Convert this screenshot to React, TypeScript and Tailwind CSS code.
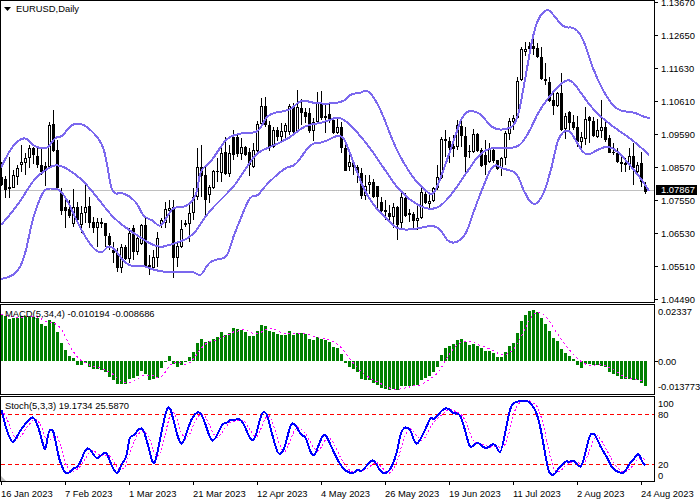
import React from 'react';

type Candle = [number, number, number, number, number]; // high, body top, body bottom, low, bull

const candles: Candle[] = [
  [162,177,185,186,0],[176,179,190,198,0],[157,187,189,198,1],[170,175,188,188,1],[165,168,177,185,1],[145,162,165,172,1],
  [153,158,163,175,1],[145,148,158,168,1],[147,148,155,164,0],[148,156,165,168,0],[148,165,172,175,0],[162,166,170,186,0],
  [122,125,167,168,1],[110,124,151,152,0],[140,150,188,190,0],[188,192,211,215,0],[197,207,211,228,0],[200,209,216,218,0],
  [189,207,224,227,1],[202,207,220,223,0],[206,213,225,233,1],[183,207,213,223,1],[197,206,223,228,0],[217,222,228,233,0],
  [218,222,228,247,1],[218,222,224,228,0],[223,223,236,247,0],[233,236,245,250,0],[242,250,253,263,0],[248,253,268,272,0],
  [244,247,268,273,1],[245,247,259,260,0],[228,233,259,263,1],[225,228,252,260,0],[235,238,252,255,1],[224,225,244,245,1],
  [217,225,267,268,0],[255,265,268,275,0],[250,257,268,269,1],[232,238,258,267,1],[218,220,224,228,1],[202,209,223,228,1],
  [200,208,211,223,1],[200,207,258,278,0],[241,246,258,267,1],[220,229,247,248,1],[220,223,225,227,0],[205,213,224,242,1],
  [188,197,213,220,1],[148,167,197,200,1],[145,167,176,197,0],[167,175,200,215,0],[185,187,195,203,1],[170,171,188,189,1],
  [158,171,172,182,0],[147,153,173,182,1],[137,152,174,175,0],[145,153,174,177,1],[130,137,155,160,0],[133,137,154,157,0],
  [138,147,154,160,1],[146,147,155,156,0],[148,152,165,176,0],[143,150,167,168,1],[121,124,151,152,1],[98,106,124,125,1],
  [97,106,125,127,0],[121,125,147,151,0],[127,130,147,148,1],[127,130,137,141,0],[123,131,137,142,1],[123,125,132,138,1],
  [104,106,132,135,1],[103,107,132,133,0],[90,107,132,133,1],[99,108,113,125,0],[108,112,117,123,0],[108,113,131,133,0],
  [118,122,131,141,1],[92,103,122,123,1],[91,103,118,120,0],[103,116,118,133,0],[103,114,120,123,0],[117,120,133,134,0],
  [118,127,133,134,1],[122,127,148,153,0],[145,148,171,171,0],[152,162,167,171,1],[160,162,167,175,0],[165,167,173,183,0],
  [168,173,196,199,0],[175,186,196,200,1],[175,182,185,194,1],[179,182,197,198,0],[186,186,197,210,0],[197,202,211,212,0],
  [200,210,212,220,0],[205,213,217,222,0],[203,207,217,228,1],[206,207,225,240,0],[193,197,223,228,1],[193,198,216,217,0],
  [209,213,215,222,0],[212,214,221,228,0],[205,218,221,230,1],[188,192,218,219,1],[190,194,203,204,0],[192,201,204,208,1],
  [187,188,201,202,1],[165,177,188,190,1],[137,139,178,179,1],[130,139,141,157,0],[137,141,148,163,0],[135,146,149,157,0],
  [120,125,147,150,1],[120,126,136,147,0],[127,136,157,172,0],[145,151,152,158,0],[129,134,152,153,1],[133,134,151,152,0],
  [148,150,166,167,0],[140,155,165,175,0],[143,148,162,163,1],[148,150,161,163,0],[160,160,169,170,0],[157,158,168,176,1],
  [131,133,158,165,1],[118,121,134,140,1],[115,118,122,130,1],[77,81,118,119,1],[47,49,80,81,1],[42,49,52,56,1],
  [42,46,49,50,0],[32,46,49,55,0],[43,48,57,58,0],[47,57,79,80,0],[63,79,81,85,0],[77,82,101,102,0],
  [93,100,106,115,0],[92,93,106,107,1],[73,93,130,131,0],[113,116,129,139,1],[111,112,123,130,0],[115,122,128,130,0],
  [116,127,142,147,0],[132,137,142,152,1],[107,119,139,145,1],[116,117,121,143,0],[117,121,136,137,0],[119,130,137,138,1],
  [100,127,131,138,1],[120,127,140,142,0],[135,138,153,153,0],[143,152,153,155,0],[148,153,162,163,0],[157,162,164,172,0],
  [158,163,165,172,1],[148,156,165,170,1],[143,156,168,185,0],[162,165,172,175,1],[152,163,182,187,0],[182,185,192,194,0],
];

// bollinger bands, traced in page pixels
const upperBand = '1,168 3,163 13,145 25,136 33,146 47,150 55,137 62,137 70,126 77,123 87,126 102,142 107,163 112,195 123,192 137,202 143,217 153,220 160,228 167,217 173,207 187,207 197,195 200,170 210,163 220,148 227,138 240,133 253,133 260,130 268,113 290,111 301,99 316,104 343,103 350,94 361,93 368,89 380,107 396,150 413,178 423,188 433,197 441,177 453,143 464,110 480,112 492,129 507,130 517,123 525,80 535,23 547,7 555,17 564,28 575,27 584,40 592,67 604,93 617,111 634,112 644,117 650,118';
const middleBand = '1,225 17,207 33,180 45,170 58,163 80,177 97,197 113,218 133,233 157,248 170,245 193,237 207,213 233,188 243,173 256,153 270,147 290,138 305,125 323,123 336,117 346,120 366,142 383,167 400,192 420,207 436,210 450,197 467,172 480,153 493,147 517,149 528,135 539,110 557,87 569,78 577,87 593,110 613,127 633,140 649,155';
const lowerBand = '1,279 15,277 25,257 32,220 43,190 50,188 63,190 82,233 100,257 110,242 127,267 143,265 153,270 173,273 193,271 201,277 208,263 217,259 227,258 233,237 243,213 250,196 258,196 263,188 285,167 296,166 310,143 323,143 341,133 348,147 366,197 390,223 400,230 416,229 433,225 441,230 450,245 465,238 473,213 483,187 493,163 503,169 517,172 523,190 533,207 543,197 552,167 558,137 567,129 573,135 585,157 597,150 607,146 617,150 640,177 649,191';

const macd = [
  47,45,42,43,43,45,45,44,44,43,37,35,41,39,29,18,11,5,3,-4,-4,-2,-6,-8,-8,-9,-11,-16,-19,-23,-23,-23,-18,-17,-15,-10,-13,-19,-18,-17,-7,-1,5,-3,-6,-4,-1,4,9,18,22,19,20,22,24,29,26,28,
  33,32,31,29,25,25,30,36,35,30,29,27,26,26,30,26,28,28,27,22,21,24,22,21,19,14,13,7,-2,-6,-8,-11,-18,-19,-19,-22,-24,-27,-28,-29,-28,-29,-25,-25,-25,-25,-24,-19,-17,-15,-11,-6,6,13,15,17,21,22,19,
  16,17,15,13,10,10,8,4,4,9,15,18,28,40,46,50,51,49,43,37,30,23,20,12,8,5,2,-4,-7,-3,-3,-4,-4,-5,-6,-11,-13,-15,-18,-18,-18,-19,-19,-22,-25,
];

const stochTrace: [number, number][] = [
  [1,410],[5,427],[10,440],[13,443],[20,430],[28,420],[33,416],[38,427],[42,443],[45,452],[48,430],[53,429],[58,457],[62,468],[65,474],[70,472],[73,468],[78,467],[85,449],[89,448],[95,458],[98,458],[103,453],[106,452],[112,468],[117,475],[122,462],[126,458],[129,436],[133,436],[139,428],[143,429],[148,447],[153,467],[157,453],[165,412],[169,405],[173,420],[178,440],[182,446],[190,420],[197,411],[202,415],[210,440],[214,441],[222,423],[227,423],[230,419],[233,421],
  [238,418],[243,423],[249,438],[254,442],[261,412],[266,412],[270,428],[277,454],[281,454],[285,445],[290,424],[294,423],[301,436],[305,436],[310,453],[314,457],[321,437],[325,433],[333,452],[341,467],[348,473],[354,473],[357,469],[361,472],[370,461],[374,460],[381,474],[389,472],[396,455],[401,428],[409,427],[414,442],[417,445],[426,427],[430,417],[434,420],[442,409],[448,408],[453,414],[457,413],[461,417],[467,440],
  [470,449],[477,441],[485,450],[494,442],[498,452],[501,452],[509,410],[513,402],[522,401],[529,401],[538,415],[547,468],[550,475],[554,475],[558,468],[562,465],[565,461],[569,462],[574,460],[578,467],[582,466],[589,434],[594,433],[600,447],[607,458],[612,469],[620,473],[624,473],[630,462],[633,460],[638,452],[642,463],[645,465],
];

const candleX = (i: number) => 1 + i * 4;

const stochAt = (x: number) => {
  for (let i = 1; i < stochTrace.length; i++) {
    const [x0, y0] = stochTrace[i - 1];
    const [x1, y1] = stochTrace[i];
    if (x <= x1) return y0 + ((y1 - y0) * (x - x0)) / (x1 - x0);
  }
  return stochTrace[stochTrace.length - 1][1];
};

// rounds the corners of a traced line: quadratic curves through the segment midpoints
const smooth = (pts: number[][]) => {
  let d = `M${pts[0][0]} ${pts[0][1]}`;
  for (let i = 1; i < pts.length - 1; i++) {
    const mx = (pts[i][0] + pts[i + 1][0]) / 2;
    const my = (pts[i][1] + pts[i + 1][1]) / 2;
    d += ` Q${pts[i][0]} ${pts[i][1]} ${mx} ${my}`;
  }
  const last = pts[pts.length - 1];
  return `${d} L${last[0]} ${last[1]}`;
};

const bandPath = (s: string) => smooth(s.split(' ').map((p) => p.split(',').map(Number)));

// signal lines are plain moving averages of the main lines
const macdSignal = macd
  .map((_, i) => {
    const win = macd.slice(Math.max(0, i - 3), i + 1);
    const y = 361 - win.reduce((a, b) => a + b, 0) / win.length;
    return `${candleX(i) + 0.5},${y.toFixed(1)}`;
  })
  .join(' ');

const stochSignal = candles
  .map((_, i) => {
    const ys = [i, i - 1, i - 2].map((k) => stochAt(candleX(Math.max(0, k))));
    return `${candleX(i) + 0.5},${((ys[0] + ys[1] + ys[2]) / 3).toFixed(1)}`;
  })
  .join(' ');

const priceLabels = ['1.13670', '1.12650', '1.11630', '1.10610', '1.09590', '1.08570', '1.07550', '1.06530', '1.05510', '1.04490'];
const dateLabels = ['16 Jan 2023', '7 Feb 2023', '1 Mar 2023', '21 Mar 2023', '12 Apr 2023', '4 May 2023', '26 May 2023', '19 Jun 2023', '11 Jul 2023', '2 Aug 2023', '24 Aug 2023'];

const Tick = () => <span className="w-[3px] h-px bg-black shrink-0" />;

const App: React.FC = () => {
  return (
    <div className="relative w-[700px] h-[500px] overflow-hidden bg-white text-black text-[9.4px] leading-[11px] [font-family:'Liberation_Sans',sans-serif]">
      <div className="flex flex-col gap-px">
        {/* price pane */}
        <div className="flex h-[303px]">
          <div className="relative w-[655px] shrink-0 border border-black">
            <svg width={653} height={301} viewBox="1 1 653 301" className="block">
              <line x1={1} x2={654} y1={190.5} y2={190.5} stroke="#c0c0c0" />
              <g shapeRendering="crispEdges">
                {candles.map(([hi, top, bot, lo, bull], i) => {
                  const x = candleX(i);
                  return (
                    <g key={i}>
                      <rect x={x} y={hi} width={1} height={lo - hi} fill="#000" />
                      {bull ? (
                        <rect x={x - 0.5} y={top + 0.5} width={2} height={Math.max(bot - top - 1, 1)} fill="#fff" stroke="#000" />
                      ) : (
                        <rect x={x - 1} y={top} width={3} height={Math.max(bot - top, 1)} fill="#000" />
                      )}
                    </g>
                  );
                })}
              </g>
              <g fill="none" stroke="#7b68ee" strokeWidth={2} strokeLinejoin="round" shapeRendering="crispEdges">
                <path d={bandPath(upperBand)} />
                <path d={bandPath(middleBand)} />
                <path d={bandPath(lowerBand)} />
              </g>
              <polygon points="4,7 11,7 7.5,11" fill="#000" />
            </svg>
            <span className="absolute left-[15px] top-[2px]">EURUSD,Daily</span>
          </div>
          <div className="relative flex-1">
            <div className="flex flex-col -mt-[14px] h-[303px]">
              {priceLabels.map((p) => (
                <div key={p} className="flex items-center h-[33px] shrink-0 gap-[3px]">
                  <Tick />
                  <span>{p}</span>
                </div>
              ))}
            </div>
            <span className="absolute left-[1px] top-[185px] w-[41px] h-[10px] bg-black text-white leading-[10px] pl-[5px]">1.07867</span>
          </div>
        </div>

        {/* macd pane */}
        <div className="flex h-[91px]">
          <div className="relative w-[655px] shrink-0 border border-black">
            <svg width={653} height={89} viewBox="1 305 653 89" className="block">
              <g shapeRendering="crispEdges" fill="#008000">
                {macd.map((h, i) => (
                  <rect key={i} x={candleX(i) - 1} y={h > 0 ? 361 - h : 361} width={3} height={Math.abs(h)} />
                ))}
              </g>
              <polyline points={macdSignal} fill="none" stroke="#ff00ff" strokeDasharray="2 3" shapeRendering="crispEdges" />
            </svg>
            <span className="absolute left-[4px] top-[3px]">MACD(5,34,4) -0.010194 -0.008686</span>
          </div>
          <div className="flex-1 flex flex-col pl-[3px] whitespace-nowrap overflow-hidden">
            <span className="h-[12px] leading-[12px] mt-[2px]">0.02337</span>
            <div className="flex items-center h-[12px] mt-[37px] -ml-[3px]">
              <Tick />
              <span>0.00</span>
            </div>
            <span className="h-[12px] leading-[12px] mt-[14px]">-0.013773</span>
          </div>
        </div>

        {/* stochastic pane */}
        <div className="flex h-[86px]">
          <div className="relative w-[655px] shrink-0 border border-black">
            <svg width={653} height={84} viewBox="1 397 653 84" className="block">
              <polygon points="1,476 1,481 6,481" fill="#c0c0c0" />
              <g stroke="#ff0000" strokeDasharray="4 3" shapeRendering="crispEdges">
                <line x1={1} x2={654} y1={414.5} y2={414.5} />
                <line x1={1} x2={654} y1={464.5} y2={464.5} />
              </g>
              <polyline points={stochSignal} fill="none" stroke="#ff00ff" strokeDasharray="2 2" shapeRendering="crispEdges" />
              <path
                d={smooth(stochTrace.map(([x, y]) => [x + 0.5, y]))}
                fill="none"
                stroke="#0000ff"
                strokeWidth={2}
                strokeLinejoin="round"
                shapeRendering="crispEdges"
              />
            </svg>
            <span className="absolute left-[4px] top-[3px]">Stoch(5,3,3) 19.1734 25.5870</span>
          </div>
          <div className="flex-1 flex flex-col pl-[3px] pt-[2px]">
            <span className="h-[11px]">100</span>
            <span className="h-[11px]">80</span>
            <span className="h-[11px] mt-[39px]">20</span>
            <span className="h-[11px]">0</span>
          </div>
        </div>
      </div>

      {/* date axis */}
      <div className="flex pl-px">
        {dateLabels.map((d) => (
          <div key={d} className="w-[64px] shrink-0 flex flex-col">
            <span className="w-px h-[3px] bg-black" />
            <span className="mt-[3px] whitespace-nowrap">{d}</span>
          </div>
        ))}
      </div>
    </div>
  );
};

export default App;
